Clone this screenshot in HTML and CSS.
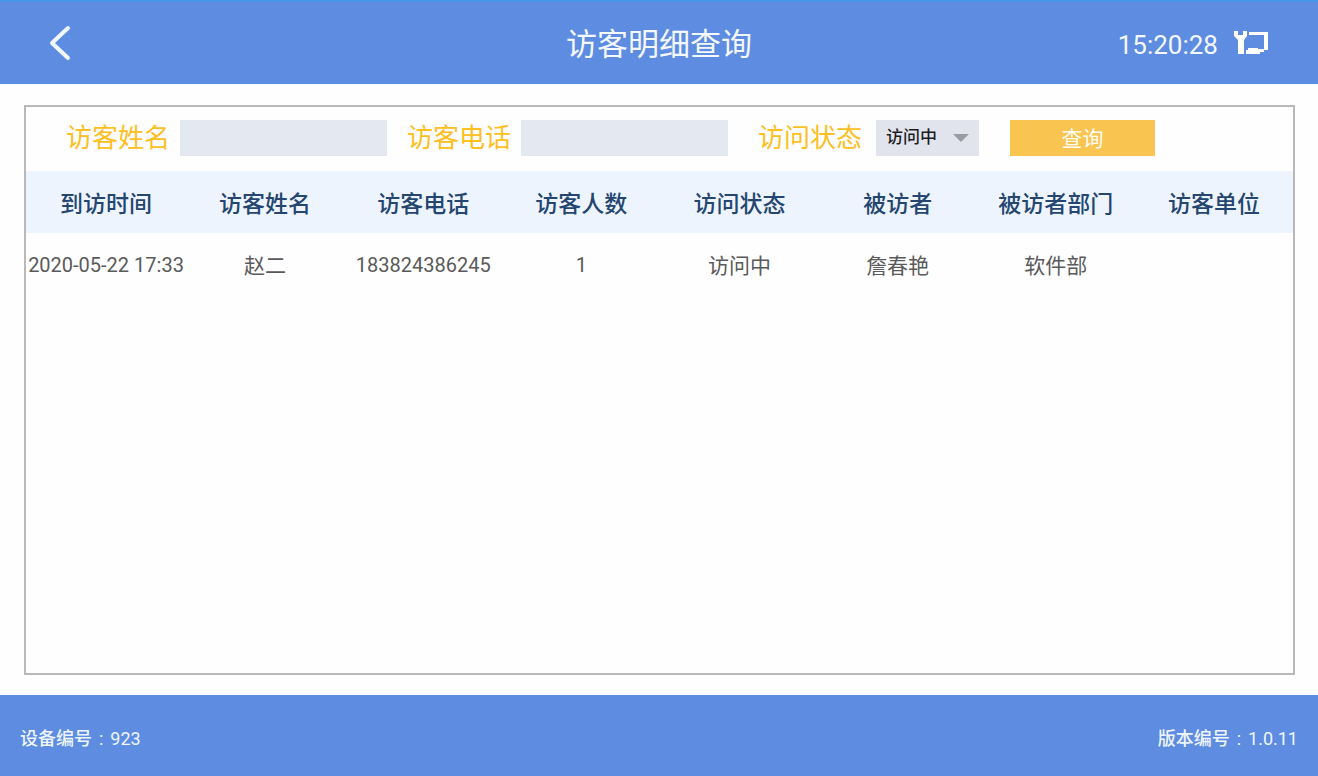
FILE: index.html
```html
<!DOCTYPE html>
<html lang="zh-CN">
<head>
<meta charset="utf-8">
<meta name="viewport" content="width=device-width, initial-scale=1">
<title>访客明细查询</title>
<link rel="stylesheet" href="styles.css">
</head>
<body>
<header class="topbar">
  <button class="back" type="button" aria-label="返回">
    <svg width="24" height="36" viewBox="0 0 24 36" fill="none" stroke="#f1f8ff" stroke-width="4" stroke-linecap="round" stroke-linejoin="round"><path d="M20 3 4 18 20 33"/></svg>
  </button>
  <h1 class="title">访客明细查询</h1>
  <div class="status">
    <time class="clock">15:20:28</time>
    <svg width="36" height="24" viewBox="0 0 36 24" aria-hidden="true">
      <path fill="#fff" d="M0 0h4v4h5V0h4v5l-3 4v14H4V9L0 5z"/>
      <path fill="#fff" d="M15 1h19v18h-4v2h-4v2H12v-4h2v-2h10v1h6V4H15z"/>
    </svg>
  </div>
</header>
<main class="content">
  <section class="panel">
    <form class="filters">
      <label class="label" for="name">访客姓名</label>
      <input class="field" id="name" type="text">
      <label class="label label-next" for="phone">访客电话</label>
      <input class="field" id="phone" type="text">
      <label class="label label-state" for="state">访问状态</label>
      <div class="picker">
        <select class="select" id="state"><option>访问中</option></select>
        <svg class="arrow" width="16" height="8" viewBox="0 0 16 8" aria-hidden="true"><path fill="#9a9ba1" d="M0 0h16L8 8z"/></svg>
      </div>
      <button class="search" type="button">查询</button>
    </form>
    <table class="records">
      <thead>
        <tr><th class="time-col">到访时间</th><th>访客姓名</th><th>访客电话</th><th>访客人数</th><th>访问状态</th><th>被访者</th><th>被访者部门</th><th>访客单位</th></tr>
      </thead>
      <tbody>
        <tr><td class="number">2020-05-22 17:33</td><td>赵二</td><td class="number">183824386245</td><td class="number">1</td><td>访问中</td><td>詹春艳</td><td>软件部</td><td></td></tr>
      </tbody>
    </table>
  </section>
</main>
<footer class="bottombar">
  <span class="info"><span class="info-name">设备编号</span><span>:</span><span>923</span></span>
  <span class="info"><span class="info-name">版本编号</span><span>:</span><span>1.0.11</span></span>
</footer>
</body>
</html>
```

FILE: styles.css
```css
* {
  box-sizing: border-box;
}

body {
  margin: 0;
  min-height: 100vh;
  display: flex;
  flex-direction: column;
  background: #fefefe;
  color: #5a5a5a;
  font-family: Roboto, "Noto Sans CJK SC", sans-serif;
}

button,
input,
select {
  border: 0;
  border-radius: 0;
  padding: 0;
  font-family: inherit;
}

.topbar {
  display: grid;
  grid-template-columns: 1fr auto 1fr;
  align-items: center;
  height: 84px;
  padding: 2px 48px 0;
  background: #5e8ce0;
  box-shadow: inset 0 2px #4596e6;
  color: #f4f8ff;
}

.back {
  justify-self: start;
  display: flex;
  background: none;
}

.title {
  margin: 0;
  padding-top: 4px;
  font-size: 31px;
  font-weight: 400;
  line-height: 40px;
}

.status {
  justify-self: end;
  display: flex;
  align-items: center;
  gap: 16px;
}

.clock {
  padding-top: 3px;
  font-size: 26px;
  line-height: 32px;
}

.content {
  flex: 1;
  display: flex;
  padding: 21px 23px 20px 24px;
}

.panel {
  flex: 1;
  min-width: 0;
  border: 2px solid #b9b9b9;
}

.filters {
  display: flex;
  align-items: center;
  height: 64px;
  padding: 0 40px 2px;
}

.label {
  flex: none;
  margin-right: 10px;
  color: #fdbf22;
  font-size: 26px;
  line-height: 36px;
}

.label-next {
  margin-left: 20px;
}

.label-state {
  margin-left: 30px;
  margin-right: 14px;
}

.field {
  flex: 0 1 207px;
  min-width: 0;
  height: 36px;
  padding: 0 8px;
  background: #e4e8f0;
  font-size: 21px;
}

.picker {
  position: relative;
  flex: 0 0 103px;
}

.select {
  display: block;
  width: 100%;
  height: 36px;
  padding: 0 0 2px 10px;
  appearance: none;
  background: #e1e4ed;
  color: #1c1c1e;
  font-size: 17px;
  font-weight: 500;
}

.arrow {
  position: absolute;
  right: 10px;
  top: 14px;
  pointer-events: none;
}

.search {
  flex: 0 1 145px;
  height: 36px;
  margin-left: 31px;
  padding-bottom: 3px;
  background: #f9c44f;
  color: #fffdf5;
  font-size: 21px;
}

.records {
  width: 100%;
  table-layout: fixed;
  border-collapse: collapse;
}

.records th,
.records td {
  height: 62px;
  padding: 0;
  text-align: center;
  white-space: nowrap;
}

.records th {
  background: #edf4fe;
  color: #24466f;
  font-size: 23px;
  font-weight: 500;
}

.records .time-col {
  width: 160px;
}

.records td {
  font-size: 21px;
}

.records .number {
  padding-top: 2px;
  font-size: 20px;
}

.bottombar {
  display: flex;
  align-items: center;
  justify-content: space-between;
  height: 81px;
  padding: 2px 20px 0;
  background: #5e8ce0;
  color: #eef5ff;
  font-size: 18px;
}

.info {
  display: flex;
  align-items: baseline;
  gap: 7px;
}

.info-name {
  font-weight: 500;
}
```
